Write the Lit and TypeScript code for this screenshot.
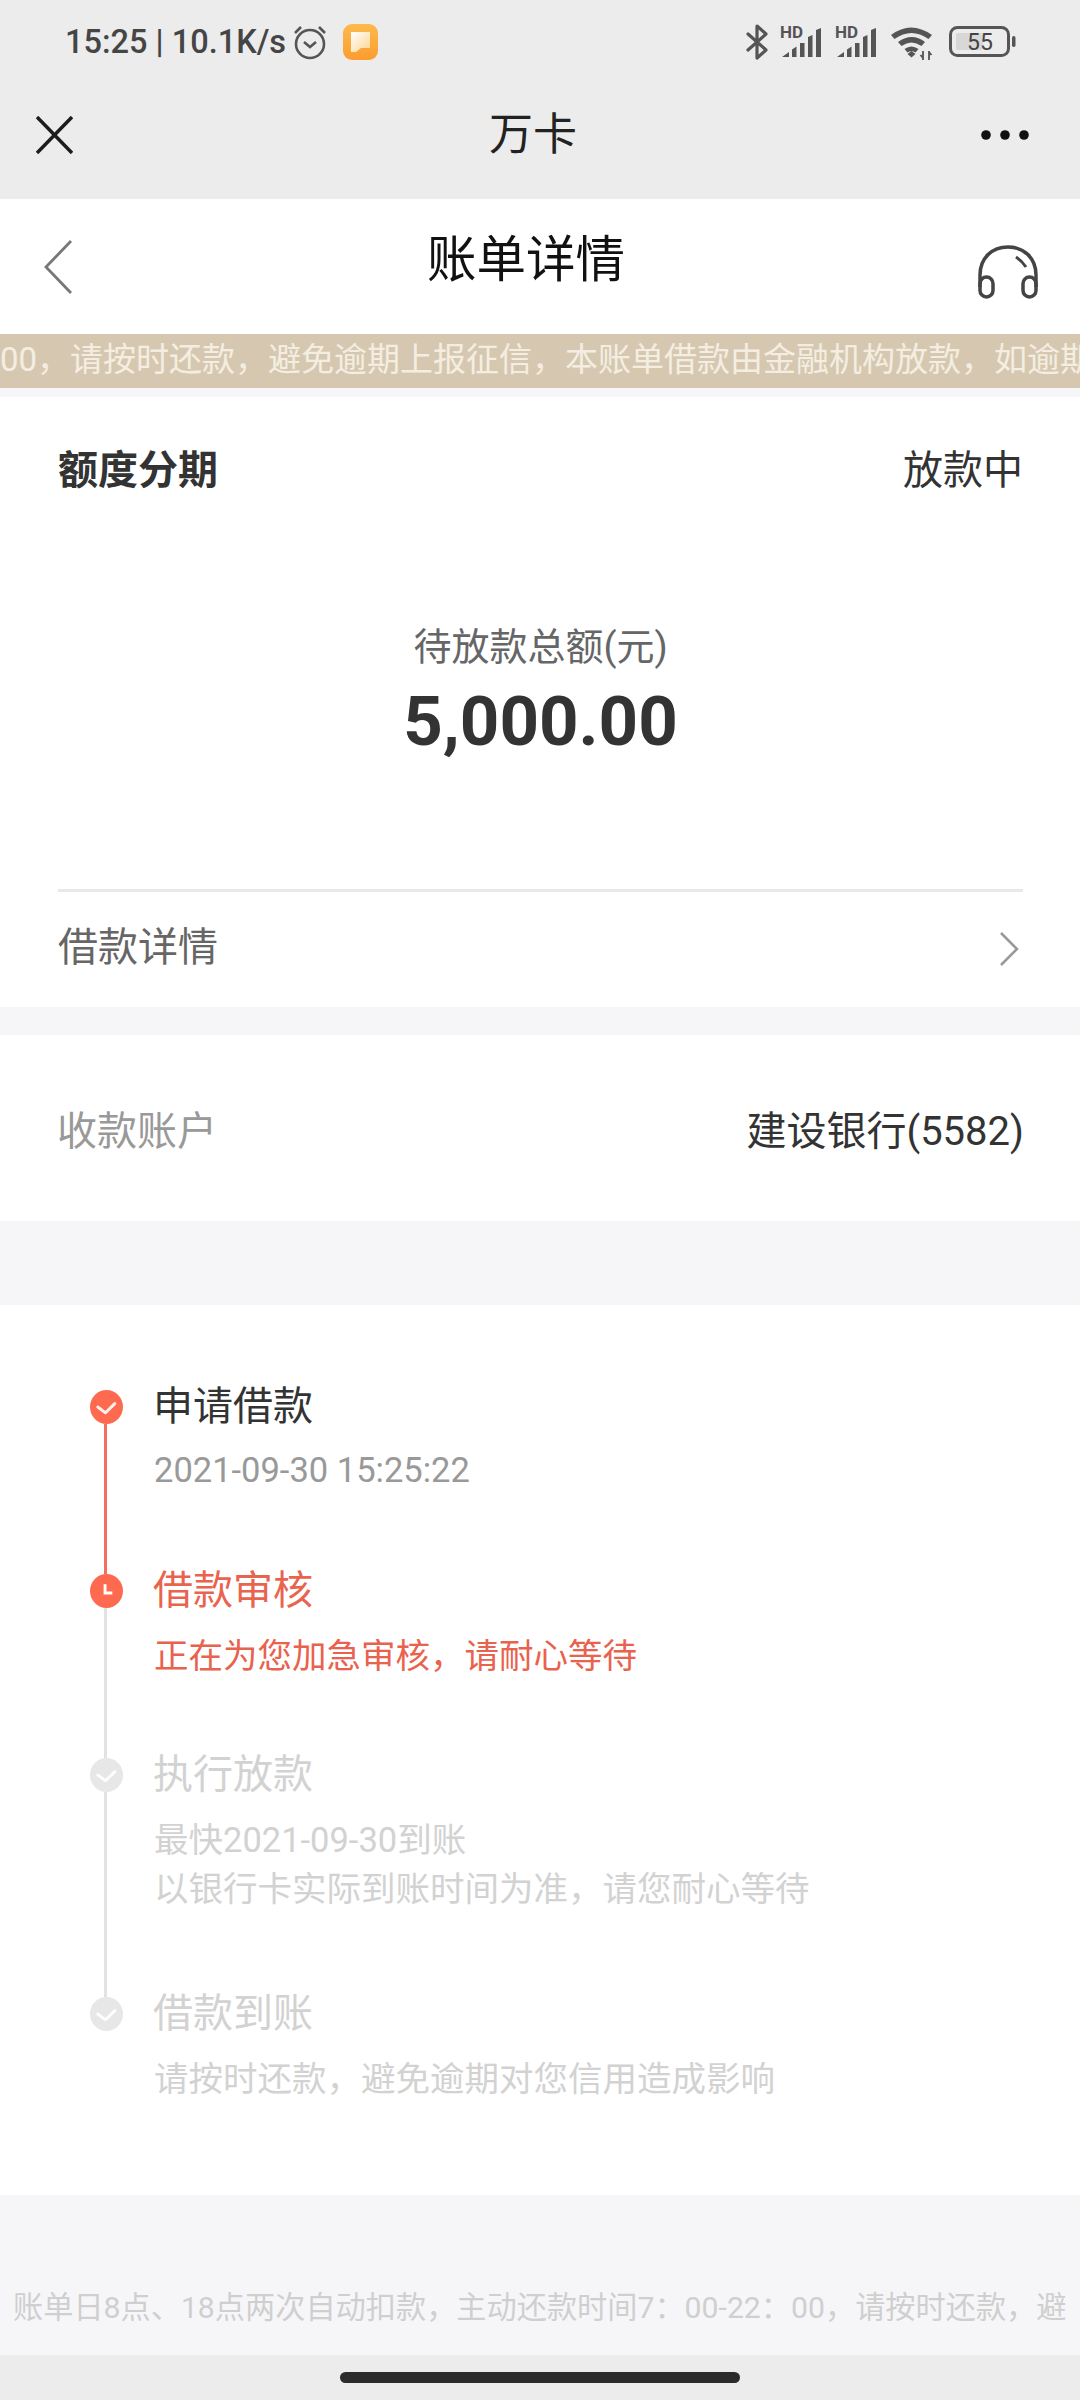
import { LitElement, html, css } from "lit";
import { customElement } from "lit/decorators.js";

const check = html`<svg class="nodeicon" viewBox="0 0 34 34"><path d="M8 17l8 6 9.500-9.500" fill="none" stroke="#fff" stroke-opacity="0.900" stroke-width="3" stroke-linecap="round" stroke-linejoin="round"/></svg>`;
const clock = html`<svg class="nodeicon" viewBox="0 0 34 34"><path d="M15.500 10v9h7.500" fill="none" stroke="#fff" stroke-width="3"/></svg>`;

@customElement("app-root")
export class AppRoot extends LitElement {
  static styles = css`
    :host { display: block; width: 1080px; height: 2400px; overflow: hidden; background: #f6f6f8; font-family: Roboto, "Noto Sans CJK SC", sans-serif; color: #333; }
    .page { display: flex; flex-direction: column; height: 2400px; }
    .top { height: 199px; background: #ececec; flex: none; display: flex; flex-direction: column; }
    .status { height: 84px; display: flex; align-items: center; padding: 0 64px 0 65px; color: #454545; }
    .time { font-size: 32.500px; font-weight: 500; white-space: nowrap; width: 228px; }
    .status svg { display: block; flex: none; overflow: visible; }
    .spacer { flex: 1; }
    .alarm { margin-right: 16px; }
    .bt { margin-right: 11px; }
    .sig { margin-right: 12px; }
    .wifi { margin-right: 16px; }
    .nav { flex: 1; display: flex; align-items: center; justify-content: space-between; padding: 0 51px 14px 36px; }
    .navtitle { font-size: 44px; color: #222; margin-left: 12px; line-height: 60px; }
    .head { height: 135px; flex: none; background: #fff; display: flex; align-items: center; justify-content: space-between; padding: 0 42px 0 44px; }
    .head .t { font-size: 49.500px; color: #111; margin-left: 2px; margin-top: -14px; line-height: 60px; }
    .headset { margin-top: 10px; }
    .banner { height: 54px; flex: none; background: #d6c8b0; color: #f4eee2; font-size: 33px; line-height: 52px; white-space: nowrap; overflow: hidden; }
    .card { background: #fff; flex: none; }
    .bill { margin-top: 9px; height: 610px; padding: 0 57px 0 58px; display: flex; flex-direction: column; }
    .billhead { display: flex; justify-content: space-between; align-items: center; height: 56px; margin-top: 42px; font-size: 40px; }
    .billhead b { font-weight: 700; }
    .amount { display: flex; flex-direction: column; align-items: center; box-sizing: border-box; border-bottom: 3px solid #e8e8e8; height: 397px; padding-top: 127px; }
    .amount .l { font-size: 38px; color: #666; line-height: 50px; }
    .amount .v { font-size: 69px; font-weight: 700; line-height: 80px; margin-top: 10px; }
    .more { flex: 1; display: flex; align-items: center; justify-content: space-between; font-size: 40px; color: #666; padding: 0 4px 12px 0; }
    .more svg { margin-top: 10px; }
    .acct { margin-top: 28px; height: 186px; padding: 0 56px 0 57px; display: flex; align-items: center; justify-content: space-between; font-size: 40px; }
    .acct .k { color: #999; }
    .tl { margin-top: 84px; height: 890px; padding: 85px 0 0 90px; box-sizing: border-box; display: flex; flex-direction: column; }
    .step { display: flex; }
    .rail { width: 33px; flex: none; display: flex; flex-direction: column; align-items: center; margin-right: 31px; }
    .node { width: 33px; height: 34px; border-radius: 50%; flex: none; background: #fe6a50; }
    .line { width: 3px; flex: 1; margin-left: -3px; background: #e2e2e2; }
    .red .line { background: #f4705a; }
    .nodeicon { width: 33px; height: 34px; display: block; }
    .grey .node { background: #e7e7e7; }
    .body { font-size: 34.500px; line-height: 49px; margin-top: -8px; }
    .title { font-size: 40px; line-height: 50px; margin-bottom: 16px; margin-left: -1px; }
    .sub { color: #999; }
    .date { margin-top: -2px; }
    .cur { color: #e9644f; }
    .cur .sub { color: #e9624d; }
    .grey .body, .grey .sub { color: #d2d2d2; }
    .foot { flex: 1; font-size: 30.200px; color: #cfcfcf; white-space: nowrap; overflow: hidden; padding: 93px 0 0 13px; line-height: 40px; box-sizing: border-box; }
    .bar { height: 45px; flex: none; background: #ececec; display: flex; justify-content: center; padding-top: 17px; box-sizing: border-box; }
    .pill { width: 400px; height: 11px; border-radius: 6px; background: #2b2b2b; }
  `;

  render() {
    return html`<div class="page">
      <div class="top">
        <div class="status">
          <span class="time">15:25 | 10.1K/s</span>
          <svg class="alarm" width="34" height="36" viewBox="0 0 34 36"><circle cx="17" cy="20" r="14" fill="none" stroke="#555" stroke-width="2.600"/><path d="M11 18l6 5 6-5" fill="none" stroke="#555" stroke-width="2.600"/><path d="M2 9l6-6M32 9l-6-6" stroke="#555" stroke-width="2.600" fill="none"/></svg>
          <svg width="35" height="36" viewBox="0 0 35 36"><defs><linearGradient id="o" x1="0" y1="0" x2="0" y2="1"><stop offset="0" stop-color="#fdb94c"/><stop offset="1" stop-color="#fb9d30"/></linearGradient><linearGradient id="w" x1="0" y1="0" x2="1" y2="1"><stop offset="0" stop-color="#fff"/><stop offset="1" stop-color="#fcd48e"/></linearGradient></defs><rect width="35" height="36" rx="9" fill="url(#o)"/><path d="M8 8h19v16h-9l-5 4h-5z" fill="url(#w)"/></svg>
          <div class="spacer"></div>
          <svg class="bt" width="23" height="36" viewBox="0 0 23 36"><path d="M2 10l18 16-9 8V2l9 8L2 26" fill="none" stroke="#555" stroke-width="3.200" stroke-linejoin="round" stroke-linecap="round"/></svg>
          ${[0, 1].map(() => html`<svg class="sig" width="43" height="32" viewBox="0 0 41 32"><text x="-1" y="12" font-family="Roboto" font-weight="700" font-size="17" fill="#555">HD</text><path d="M1 31l7-5v5zM11 23.500l4.500-3V31H11zM19 17h4.500v14H19zM27 11l4.500-2V31H27zM35 4l5-2v29h-5z" fill="#555"/></svg>`)}
          <svg class="wifi" width="43" height="36" viewBox="0 0 43 36"><path d="M1 11q20-15 41 0l-3.500 4q-17-12-34 0zM8 18q14-10 27 0l-3.500 4q-10-7-20 0zM14.500 25q7-5 14 0l-3 3.500q-4-2.500-8 0z" fill="#555"/><path d="M17.500 30l4-3 4 3-4 3.500z" fill="#555"/><path d="M33 27v9M39 27v9M30.500 31l2.500 3M41.500 31l-2.500-3" stroke="#555" stroke-width="1.800" fill="none"/></svg>
          <svg width="67" height="32" viewBox="0 0 67 32"><rect x="1.500" y="1.500" width="58" height="28" rx="7" fill="none" stroke="#555" stroke-width="3"/><rect x="7" y="7" width="27" height="17" rx="2" fill="#d8d8d8"/><rect x="63" y="10" width="3.500" height="11" rx="1.700" fill="#555"/><text x="31" y="24" text-anchor="middle" font-family="Roboto" font-size="23" fill="#444">55</text></svg>
        </div>
        <div class="nav">
          <svg width="37" height="38" viewBox="0 0 37 38"><path d="M1 1l35 36M36 1L1 37" stroke="#1c1c1c" stroke-width="3.500" fill="none"/></svg>
          <span class="navtitle">万卡</span>
          <svg width="48" height="10" viewBox="0 0 48 10"><circle cx="5" cy="5" r="4.800" fill="#111"/><circle cx="24" cy="5" r="4.800" fill="#111"/><circle cx="43" cy="5" r="4.800" fill="#111"/></svg>
        </div>
      </div>
      <div class="head">
        <svg width="28" height="54" viewBox="0 0 28 54"><path d="M27 1L2 27l25 26" fill="none" stroke="#777" stroke-width="2.800"/></svg>
        <span class="t">账单详情</span>
        <svg class="headset" width="60" height="54" viewBox="0 0 60 54"><path d="M2 42V30C2 13 14 2 30 2s28 11 28 28v12" fill="none" stroke="#444" stroke-width="3.500"/><rect x="2" y="32" width="13" height="20" rx="6.500" fill="none" stroke="#444" stroke-width="3.500"/><rect x="45" y="32" width="13" height="20" rx="6.500" fill="none" stroke="#444" stroke-width="3.500"/><path d="M38 12q6 4 10 10" fill="none" stroke="#444" stroke-width="3"/></svg>
      </div>
      <div class="banner">00，请按时还款，避免逾期上报征信，本账单借款由金融机构放款，如逾期</div>
      <div class="card bill">
        <div class="billhead"><b>额度分期</b><span>放款中</span></div>
        <div class="amount">
          <span class="l">待放款总额(元)</span>
          <span class="v">5,000.00</span>
        </div>
        <div class="more"><span>借款详情</span>
          <svg width="20" height="36" viewBox="0 0 20 36"><path d="M2 2l16 16L2 34" fill="none" stroke="#999" stroke-width="2.600"/></svg>
        </div>
      </div>
      <div class="card acct"><span class="k">收款账户</span><span>建设银行(5582)</span></div>
      <div class="card tl">
        <div class="step red" style="height:184px">
          <div class="rail"><div class="node">${check}</div><div class="line"></div></div>
          <div class="body"><div class="title">申请借款</div><div class="sub date">2021-09-30 15:25:22</div></div>
        </div>
        <div class="step cur" style="height:184px">
          <div class="rail"><div class="node">${clock}</div><div class="line"></div></div>
          <div class="body"><div class="title">借款审核</div><div class="sub">正在为您加急审核，请耐心等待</div></div>
        </div>
        <div class="step grey" style="height:239px">
          <div class="rail"><div class="node">${check}</div><div class="line"></div></div>
          <div class="body"><div class="title">执行放款</div><div class="sub">最快2021-09-30到账<br />以银行卡实际到账时间为准，请您耐心等待</div></div>
        </div>
        <div class="step grey">
          <div class="rail"><div class="node">${check}</div></div>
          <div class="body"><div class="title">借款到账</div><div class="sub">请按时还款，避免逾期对您信用造成影响</div></div>
        </div>
      </div>
      <div class="foot">账单日8点、18点两次自动扣款，主动还款时间7：00-22：00，请按时还款，避</div>
      <div class="bar"><div class="pill"></div></div>
    </div>`;
  }
}
